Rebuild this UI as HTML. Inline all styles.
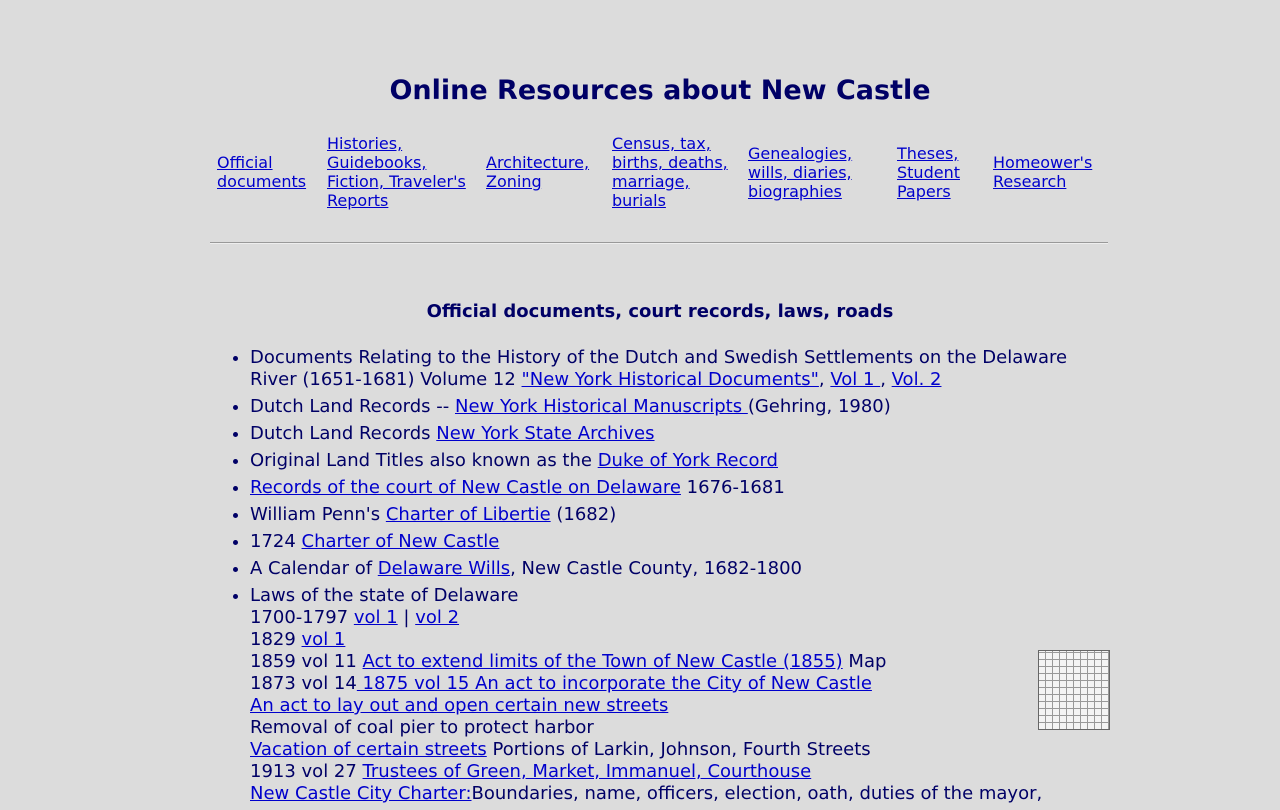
<!DOCTYPE html>
<html><head><meta charset="utf-8"><style>
html,body{height:800px;overflow:hidden;}
body{margin:0;background:#dcdcdc;font-family:"DejaVu Sans",Verdana,sans-serif;color:#000066;}
a{color:#0000cc;}
.wrap{position:absolute;left:210px;top:0;width:900px;}
h1{font-size:27px;text-align:center;margin:0;position:absolute;top:75px;left:0;width:900px;color:#000066;}
table{position:absolute;top:134px;left:0;border-collapse:collapse;font-size:16px;line-height:19px;}
td{padding:0 0 0 7px;vertical-align:middle;}
hr{position:absolute;top:242px;left:0;width:898px;margin:0;border:0;border-top:1px solid #999;border-bottom:1px solid #eee;}
h2{position:absolute;top:301px;left:0;width:900px;text-align:center;font-size:18px;margin:0;}
ul{position:absolute;top:347px;left:0;margin:0;padding-left:40px;width:860px;font-size:18px;line-height:22px;}
li{margin-bottom:5px;}
.map{position:absolute;left:828px;top:650px;width:70px;height:78px;border:1px solid #666;background:
repeating-linear-gradient(0deg,transparent 0 6px,#999 6px 7px),
repeating-linear-gradient(90deg,#f4f4f4 0 6px,#999 6px 7px);}
</style></head><body><div class="wrap">
<h1>Online Resources about New Castle</h1>
<table><tr>
<td style="width:103px"><a href="#">Official documents</a></td>
<td style="width:152px"><a href="#">Histories, Guidebooks, Fiction, Traveler's Reports</a></td>
<td style="width:119px"><a href="#">Architecture, Zoning</a></td>
<td style="width:129px"><a href="#">Census, tax, births, deaths, marriage, burials</a></td>
<td style="width:142px"><a href="#">Genealogies, wills, diaries, biographies</a></td>
<td style="width:89px"><a href="#">Theses, Student Papers</a></td>
<td style="width:110px"><a href="#">Homeower's Research</a></td>
</tr></table>
<hr>
<h2>Official documents, court records, laws, roads</h2>
<div class="map"></div>
<ul>
<li>Documents Relating to the History of the Dutch and Swedish Settlements on the Delaware River (1651-1681) Volume 12 <a href="#">"New York Historical Documents"</a>, <a href="#">Vol 1 </a>, <a href="#">Vol. 2</a></li>
<li>Dutch Land Records -- <a href="#">New York Historical Manuscripts </a>(Gehring, 1980)</li>
<li>Dutch Land Records <a href="#">New York State Archives</a></li>
<li>Original Land Titles also known as the <a href="#">Duke of York Record</a></li>
<li><a href="#">Records of the court of New Castle on Delaware</a> 1676-1681</li>
<li>William Penn's <a href="#">Charter of Libertie</a> (1682)</li>
<li>1724 <a href="#">Charter of New Castle</a></li>
<li>A Calendar of <a href="#">Delaware Wills</a>, New Castle County, 1682-1800</li>
<li>Laws of the state of Delaware<br>1700-1797 <a href="#">vol 1</a> | <a href="#">vol 2</a><br>1829 <a href="#">vol 1</a><br>1859 vol 11 <a href="#">Act to extend limits of the Town of New Castle (1855)</a> Map<br>1873 vol 14<a href="#"> 1875 vol 15 An act to incorporate the City of New Castle</a><br><a href="#">An act to lay out and open certain new streets</a><br>Removal of coal pier to protect harbor<br><a href="#">Vacation of certain streets</a> Portions of Larkin, Johnson, Fourth Streets<br>1913 vol 27 <a href="#">Trustees of Green, Market, Immanuel, Courthouse</a><br><a href="#">New Castle City Charter:</a>Boundaries, name, officers, election, oath, duties of the mayor,</li>
</ul>
</div></body></html>
